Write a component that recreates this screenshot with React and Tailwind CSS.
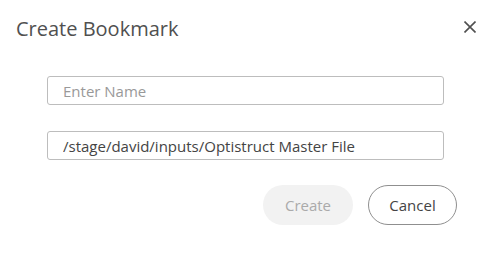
import React from "react";

export default function App() {
  const font = { fontFamily: '"Open Sans", "Noto Sans", sans-serif' };
  return (
    <div className="w-[490px] h-[253px] bg-white flex flex-col" style={font}>
      <div className="flex justify-between items-start pl-[16px] pr-[14px] pt-[15px]">
        <div className="text-[20px] leading-[28px] text-[#505050]">Create Bookmark</div>
        <button className="mt-[6px] w-[12px] h-[12px] text-[#505050]" aria-label="close">
          <svg width="12" height="12" viewBox="0 0 12 12" fill="none" stroke="currentColor" strokeWidth="1.6">
            <path d="M0.5 0.5 L11.5 11.5 M11.5 0.5 L0.5 11.5" />
          </svg>
        </button>
      </div>
      <div className="ml-[47px] w-[397px] mt-[33px] flex flex-col gap-[26px]">
        <input
          className="h-[29px] w-full border border-[#bdbdbd] rounded-[3px] px-[15px] text-[15px] text-[#444] placeholder:text-[#999] outline-none"
          placeholder="Enter Name"
          style={font}
        />
        <input
          className="h-[29px] w-full border border-[#bdbdbd] rounded-[3px] px-[15px] text-[15px] text-[#444] outline-none"
          defaultValue="/stage/david/inputs/Optistruct Master File"
          style={font}
        />
      </div>
      <div className="flex justify-end gap-[15px] pr-[33px] mt-[25px]">
        <button className="w-[90px] h-[40px] rounded-full bg-[#f2f2f2] text-[15px] text-[#aaaaaa]" style={font}>
          Create
        </button>
        <button className="w-[89px] h-[40px] rounded-full border border-[#8f8f8f] bg-white text-[15px] text-[#444]" style={font}>
          Cancel
        </button>
      </div>
    </div>
  );
}
